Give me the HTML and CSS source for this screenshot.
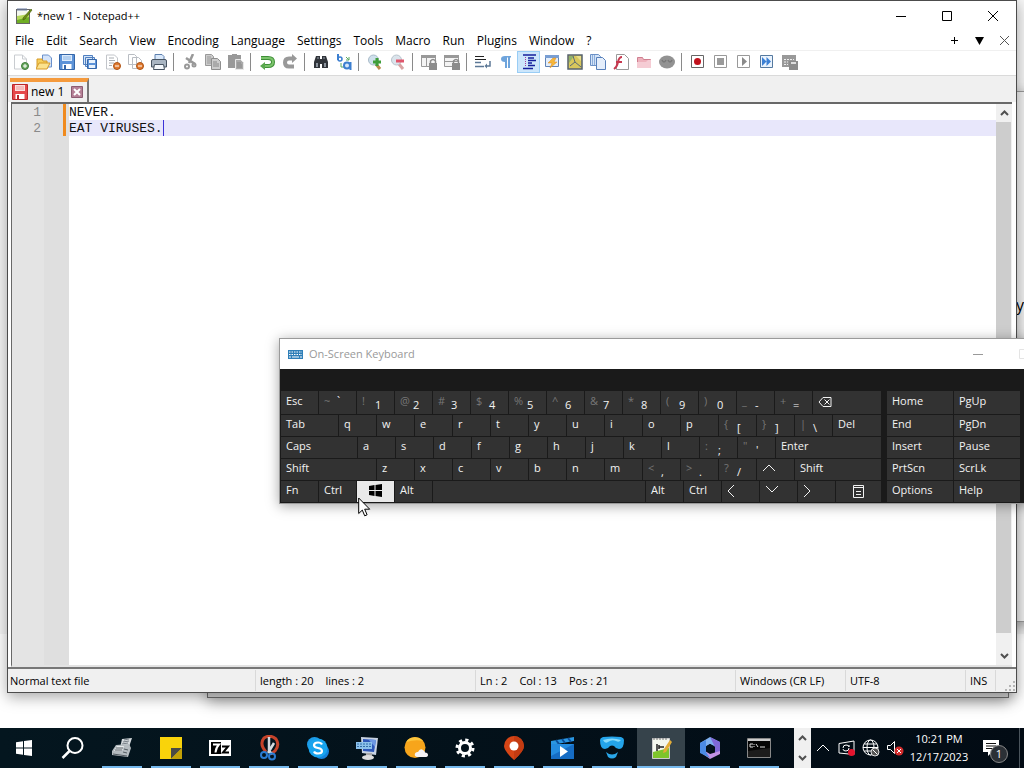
FILE: index.html
```html
<!DOCTYPE html>
<html lang="en">
<head>
    <meta charset="UTF-8">
    <meta name="viewport" content="width=device-width, initial-scale=1.0">
    <title>*new 1 - Notepad++</title>
    <link rel="stylesheet" href="styles.css">
</head>
<body>

<div class="desktop">

    <!-- windows behind the editor -->
    <div class="window back-top"></div>
    <div class="window back-right"><span class="back-text">y</span></div>
    <div class="window back-bottom"></div>

    <main class="window notepad">
        <header class="titlebar">
            <svg class="app-icon" width="18" height="18" viewBox="0 0 18 18">
                <rect x="1.5" y="2.5" width="13" height="14" fill="#f4f8ee" stroke="#666"/>
                <path d="M2 9l12-2v9H2z" fill="#b5d95c"/>
                <path d="M2 13l12-3v6H2z" fill="#6fae24"/>
                <path d="M3 1v3M5 1v3M7 1v3M9 1v3M11 1v3" stroke="#6c7fa8"/>
                <path d="M16 2l1 1-7 9-2 1 0-2z" fill="#6b8f16" stroke="#41570c" stroke-width=".6"/>
            </svg>
            <h1>*new 1 - Notepad++</h1>
            <div class="win-buttons">
                <button aria-label="Minimize"><svg width="12" height="12" viewBox="0 0 12 12"><path d="M1 6.500h10"/></svg></button>
                <button aria-label="Maximize"><svg width="12" height="12" viewBox="0 0 12 12"><path d="M1.500 1.500h9v9h-9z"/></svg></button>
                <button aria-label="Close"><svg width="12" height="12" viewBox="0 0 12 12"><path d="M1 1l10 10M11 1L1 11"/></svg></button>
            </div>
        </header>

        <nav class="menubar">
            <button>File</button>
            <button>Edit</button>
            <button>Search</button>
            <button>View</button>
            <button>Encoding</button>
            <button>Language</button>
            <button>Settings</button>
            <button>Tools</button>
            <button>Macro</button>
            <button>Run</button>
            <button>Plugins</button>
            <button>Window</button>
            <button>?</button>
            <div class="doc-buttons">
                <button aria-label="New tab"><svg width="9" height="9" viewBox="0 0 9 9"><path d="M1 4.500h7M4.500 1v7" stroke="#000"/></svg></button>
                <button aria-label="Tab list"><svg width="9" height="8" viewBox="0 0 9 8"><path d="M0 0h9L4.500 8z" fill="#000"/></svg></button>
                <button aria-label="Close tab"><svg width="9" height="9" viewBox="0 0 9 9"><path d="M0 0l9 9M9 0L0 9" stroke="#555"/></svg></button>
            </div>
        </nav>

        <div class="toolbar">
            <button aria-label="New"><svg viewBox="0 0 16 16"><path d="M1.500 1h8l4 4v10h-12z" fill="#fff" stroke="#c9ccd0"/><path d="M9.500 1v4h4" fill="none" stroke="#c9ccd0"/><circle cx="12" cy="12" r="3.500" fill="#6aa860" stroke="#3f7d3a"/><path d="M12 10v4M10 12h4" stroke="#fff"/></svg></button>
            <button aria-label="Open"><svg viewBox="0 0 16 16"><path d="M6.500 1h6l3 3v9h-9z" fill="#d5e4fa" stroke="#6a90cb"/><path d="M1 5h5l1 2h4v7H1z" fill="#f6cf5b" stroke="#d59a28"/><path d="M3 9h11l-3 6H0z" fill="#fbe28d" stroke="#d59a28"/></svg></button>
            <button aria-label="Save"><svg viewBox="0 0 16 16"><path d="M.5.500h15v15H.500z" fill="#5d93d8" stroke="#3566a8"/><path d="M3 1h10v6H3z" fill="#dcebfb"/><path d="M4 3h8M4 5h8" stroke="#8ab4e4"/><path d="M3.500 10h9v5h-9z" fill="#fff"/><path d="M5 11h2v4H5z" fill="#3566a8"/></svg></button>
            <button aria-label="Save all"><svg viewBox="0 0 16 16"><path d="M1.500 1.500h9v9h-9zM3.500 3.500h9v9h-9z" fill="#d3e4f8" stroke="#4f7fc0"/><path d="M5.500 5.500h9v9h-9z" fill="#5d93d8" stroke="#3566a8"/><path d="M7 6h6v3H7zM7 11h6v3H7z" fill="#eaf3fc"/></svg></button>
            <button aria-label="Close"><svg viewBox="0 0 16 16"><path d="M1.500 1h8l3 3v11h-11z" fill="#fff" stroke="#c2c5ca"/><path d="M4 4h5M4 6.500h6M4 9h5M4 11.500h3" stroke="#a9adb2"/><circle cx="12" cy="12" r="3.500" fill="#e07a30" stroke="#ad5213"/><path d="M10 12h4" stroke="#fff"/></svg></button>
            <button aria-label="Close all"><svg viewBox="0 0 16 16"><path d="M.5.500h6l2 2v8h-8zM4.500 3.500h6l3 3v8h-9z" fill="#fff" stroke="#b9bdc3"/><circle cx="12" cy="12" r="3.500" fill="#e07a30" stroke="#ad5213"/><path d="M10 12h4" stroke="#fff"/></svg></button>
            <button aria-label="Print"><svg viewBox="0 0 16 16"><path d="M4 6V.500h7l2 2V6" fill="#d9e8fa" stroke="#5c7fae"/><path d="M.5 7q0-1.500 1.500-1.500h12q1.500 0 1.500 1.500v6H.500z" fill="#a9b5c2" stroke="#475361"/><path d="M3.500 10.500h9l1 5h-11z" fill="#f4f8fc" stroke="#475361"/></svg></button>
            <span class="sep"></span>
            <button aria-label="Cut"><svg viewBox="0 0 16 16"><path d="M11 0L7 9M4 4l9 6" stroke="#999" stroke-width="2.500"/><circle cx="5" cy="12.500" r="2" fill="none" stroke="#999" stroke-width="2"/><circle cx="12" cy="11" r="1.500" fill="none" stroke="#999" stroke-width="2"/></svg></button>
            <button aria-label="Copy"><svg viewBox="0 0 16 16"><path d="M.5.500h6l2 2v9h-8z" fill="#ccc" stroke="#999"/><path d="M2 3h4M2 5h4M2 7h4M2 9h4" stroke="#999"/><path d="M6.500 4.500h6l3 3v8h-9z" fill="#ccc" stroke="#8e8e8e"/><path d="M8 8h4M8 10h6M8 12h6" stroke="#888"/></svg></button>
            <button aria-label="Paste"><svg viewBox="0 0 16 16"><path d="M0 1h4V0h5v1h4v13H0z" fill="#999"/><path d="M7.500 5.500h5l3 3v7h-8z" fill="#aaa" stroke="#e8e8e8"/><path d="M9 9h4M9 11h5M9 13h5" stroke="#888"/></svg></button>
            <span class="sep"></span>
            <button aria-label="Undo"><svg viewBox="0 0 16 16"><path d="M2 4h7q5 0 5 4t-5 4H5" fill="none" stroke="#3f8f38" stroke-width="4"/><path d="M2 4h7q5 0 5 4t-5 4H5" fill="none" stroke="#7cc46c" stroke-width="2"/><path d="M6 8v8L1 12z" fill="#5aa84e"/></svg></button>
            <button aria-label="Redo"><svg viewBox="0 0 16 16"><path d="M12 4.500H7q-4 0-4 4t4 4h5" fill="none" stroke="#999" stroke-width="4"/><path d="M10 0l5 4.500-5 4.500z" fill="#999"/></svg></button>
            <span class="sep"></span>
            <button aria-label="Find"><svg viewBox="0 0 16 16"><path d="M3 2h4v3h2V2h4l2 6v6H9v-4H7v4H1V8z" fill="#30343a"/><path d="M3 9h2v4H3zM11 9h2v4h-2z" fill="#8b939d"/><path d="M4 4h2M10 4h2" stroke="#9aa3ad"/></svg></button>
            <button aria-label="Replace"><svg viewBox="0 0 16 16"><path d="M2 0v6" stroke="#3c7fd0" stroke-width="2"/><circle cx="4" cy="5" r="2" fill="none" stroke="#3c7fd0" stroke-width="1.500"/><path d="M10 3l3 3M13 3v3h-3M5 9v4h4" fill="none" stroke="#5aa860"/><circle cx="11" cy="11.500" r="3" fill="#d4e6fa" stroke="#3c7fd0" stroke-width="2"/><path d="M14.500 8v8" stroke="#3c7fd0" stroke-width="2"/></svg></button>
            <span class="sep"></span>
            <button aria-label="Zoom in"><svg viewBox="0 0 16 16"><path d="M9 10l4 5" stroke="#b98b4b" stroke-width="3"/><circle cx="6.500" cy="6" r="5" fill="#cfe0ec" stroke="#a9bbc9"/><path d="M10 4v8M6 8h8" stroke="#3f9e3a" stroke-width="3"/></svg></button>
            <button aria-label="Zoom out"><svg viewBox="0 0 16 16"><path d="M9 10l4 5" stroke="#d9a3a3" stroke-width="3"/><circle cx="6.500" cy="6" r="5" fill="#dbe4ec" stroke="#b9c4cd"/><path d="M6 7h8" stroke="#e0566c" stroke-width="3"/></svg></button>
            <span class="sep"></span>
            <button aria-label="Sync vertical scrolling"><svg viewBox="0 0 16 16"><path d="M.5 1.500h14v11H.500zM5.500 2v10" fill="#f4f4f4" stroke="#999"/><path d="M0 1h15v3H0z" fill="#999"/><path d="M8 9h8v7H8z" fill="#8c8c8c"/><path d="M9.500 9V7q2.500-3 5 0v2" fill="none" stroke="#8c8c8c" stroke-width="1.500"/></svg></button>
            <button aria-label="Sync horizontal scrolling"><svg viewBox="0 0 16 16"><path d="M.5 1.500h14v11H.500zM0 7.500h14" fill="#f4f4f4" stroke="#999"/><path d="M0 1h15v3H0z" fill="#999"/><path d="M8 9h8v7H8z" fill="#8c8c8c"/><path d="M9.500 9V7q2.500-3 5 0v2" fill="none" stroke="#8c8c8c" stroke-width="1.500"/></svg></button>
            <span class="sep"></span>
            <button aria-label="Word wrap"><svg viewBox="0 0 16 16"><path d="M0 2.500h9M0 5.500h11" stroke="#222"/><path d="M0 8.500h6M0 12.500h9" stroke="#5c7896" stroke-width="1.500"/><path d="M15 7v5h-4" fill="none" stroke="#5c7896" stroke-width="1.500"/><path d="M12 9.500v5L9.500 12z" fill="#5c7896"/></svg></button>
            <button aria-label="Show all characters"><svg viewBox="0 0 16 16"><path d="M7 8Q3 8 3 5t4-3h6v1.500h-1V14h-2V3.500H9V14H7z" fill="#6ea4dc"/></svg></button>
            <button class="on" aria-label="Indent guide"><svg viewBox="0 0 16 16"><path d="M2 1h13M7 4h6M7 6.500h8M7 9h4M7 11.500h7M2 14.500h10" stroke="#16209c" stroke-width="1.700"/><path d="M4.500 3v10" stroke="#a63b9c" stroke-dasharray="1 1"/></svg></button>
            <button aria-label="Define language"><svg viewBox="0 0 16 16"><path d="M1.500 1.500h13v11h-13z" fill="#e4eefa" stroke="#6183b5"/><path d="M1 1h14v3H1z" fill="#7a9fd3"/><path d="M9 4l3 0-2 4h3l-7 6 2-5H4z" fill="#f6b73a" stroke="#dd8b22" stroke-width=".5"/></svg></button>
            <button aria-label="Document map"><svg viewBox="0 0 16 16"><path d="M1 1h14v14H1z" fill="#d8c75c" stroke="#56626e" stroke-width="1.500"/><path d="M2 2l5 0-5 7z" fill="#91b36b"/><path d="M6 2l2 6 6 5M8 8l-5 4" fill="none" stroke="#5a6b75"/><path d="M9 2h5v5z" fill="#e9df8b"/></svg></button>
            <button aria-label="Document list"><svg viewBox="0 0 16 16"><path d="M.5.500h8l2 2v9H.500z" fill="#d3e3f7" stroke="#6a90c6"/><path d="M6.500 3.500h6l3 3v9h-9z" fill="#e4eefb" stroke="#5780bb"/><path d="M2.500 1v10M4.500 1v10" stroke="#8caedb"/></svg></button>
            <button aria-label="Function list"><svg viewBox="0 0 16 16"><path d="M3.500.500h8l4 4v11h-12z" fill="#fff" stroke="#9a9a9a"/><path d="M9 3Q6 3 5 8t-4 7M3 8h6" fill="none" stroke="#c7394f" stroke-width="2"/></svg></button>
            <button aria-label="Folder as workspace"><svg viewBox="0 0 16 16"><path d="M1.500 3.500h5l1 2h7v8h-13z" fill="#eeb1bc" stroke="#cf7f90"/><path d="M1 8h9l2-2h3v8H1z" fill="#f5ccd4"/></svg></button>
            <button aria-label="Monitoring"><svg viewBox="0 0 16 16"><ellipse cx="8" cy="8" rx="8" ry="6.500" fill="#929292"/><path d="M3 6q2 4 4 0M9 6q2 4 4 0" fill="none" stroke="#777" stroke-width="1.500"/></svg></button>
            <span class="sep"></span>
            <button aria-label="Record macro"><svg viewBox="0 0 16 16"><path d="M1.500 1.500h12v12h-12z" fill="#fff" stroke="#666"/><circle cx="7.500" cy="7.500" r="3.500" fill="#c1121c"/></svg></button>
            <button aria-label="Stop recording"><svg viewBox="0 0 16 16"><path d="M1.500 1.500h12v12h-12z" fill="#fff" stroke="#999"/><path d="M4 4h7v7H4z" fill="#9a9a9a"/></svg></button>
            <button aria-label="Play macro"><svg viewBox="0 0 16 16"><path d="M1.500 1.500h12v12h-12z" fill="#fff" stroke="#999"/><path d="M6 3l5 4.500L6 12z" fill="#8a8a8a"/></svg></button>
            <button aria-label="Run macro multiple times"><svg viewBox="0 0 16 16"><path d="M1.500 1.500h12v12h-12z" fill="#eaf3fd" stroke="#55799f"/><path d="M3 3l4.500 4.500L3 12zM7.500 3L12 7.500 7.500 12z" fill="#3c80d4"/></svg></button>
            <button aria-label="Save macro"><svg viewBox="0 0 16 16"><path d="M0 1h14v12H0z" fill="#999"/><path d="M2 5.500h10M2 8h4M2 10.500h4" stroke="#eee" stroke-dasharray="2 1"/><path d="M7 7h9v9H7z" fill="#8b8b8b"/><path d="M9 8h5v2H9z" fill="#ddd"/></svg></button>
        </div>

        <div class="tabbar">
            <div class="tab">
                <svg width="16" height="16" viewBox="0 0 16 16"><path d="M.5.500h15v15H.500z" fill="#e5484a" stroke="#b9272b"/><path d="M3 1h10v6H3z" fill="#fbe0e0"/><path d="M4 3h8M4 5h8" stroke="#e99"/><path d="M3.500 10h9v5h-9z" fill="#fff"/><path d="M5 11h2v4H5z" fill="#b9272b"/></svg>
                <span>new 1</span>
                <button aria-label="Close new 1"><svg width="12" height="12" viewBox="0 0 12 12"><path d="M.5.500h11v11H.500z" fill="#b58096" stroke="#8d5c72"/><path d="M3 3l6 6M9 3l-6 6" stroke="#fff" stroke-width="2"/></svg></button>
            </div>
        </div>

        <section class="editor">
            <div class="line-numbers">1<br>2</div>
            <div class="fold-margin"><span class="changed"></span></div>
            <div class="text-area">
                <textarea aria-label="Document text" spellcheck="false">NEVER.
EAT VIRUSES.</textarea>
                <span class="caret"></span>
            </div>
            <div class="scrollbar">
                <button aria-label="Scroll up"><svg width="9" height="6" viewBox="0 0 9 6"><path d="M1 5l3.500-3.500L8 5"/></svg></button>
                <div class="thumb"></div>
                <button aria-label="Scroll down"><svg width="9" height="6" viewBox="0 0 9 6"><path d="M1 1l3.500 3.500L8 1"/></svg></button>
            </div>
        </section>

        <footer class="statusbar">
            <span>Normal text file</span>
            <span class="pair"><span>length : 20</span><span>lines : 2</span></span>
            <span class="pair"><span>Ln : 2</span><span>Col : 13</span><span>Pos : 21</span></span>
            <span>Windows (CR LF)</span>
            <span>UTF-8</span>
            <span>INS</span>
            <span class="grip"><svg width="10" height="10" viewBox="0 0 10 10"><path d="M8 0h2v2H8zM4 4h2v2H4zM8 4h2v2H8zM0 8h2v2H0zM4 8h2v2H4zM8 8h2v2H8z" fill="#b5b5b5"/></svg></span>
        </footer>
    </main>

    <section class="osk">
        <header class="osk-title">
            <svg width="15" height="9" viewBox="0 0 15 9"><path d="M0 0h15v9H0z" fill="#2f7fb8"/><path d="M1 2h13M1 4.500h13" stroke="#fff" stroke-dasharray="1.500 1"/><path d="M1 7h2M4 7h7M12 7h2" stroke="#fff"/></svg>
            <h2>On-Screen Keyboard</h2>
            <div class="win-buttons">
                <button aria-label="Minimize keyboard"><svg width="12" height="12" viewBox="0 0 12 12"><path d="M1 6.500h10"/></svg></button>
                <button disabled aria-label="Maximize keyboard"><svg width="12" height="12" viewBox="0 0 12 12"><path d="M1.500 1.500h9v9h-9z"/></svg></button>
                <button aria-label="Close keyboard"><svg width="12" height="12" viewBox="0 0 12 12"><path d="M1 1l10 10M11 1L1 11"/></svg></button>
            </div>
        </header>
        <div class="osk-body">
            <div class="keys">
                <div class="row first">
                    <button>Esc</button>
                    <button class="dual flat"><sup>~</sup><b>`</b></button>
                    <button class="dual"><sup>!</sup><b>1</b></button>
                    <button class="dual"><sup>@</sup><b>2</b></button>
                    <button class="dual"><sup>#</sup><b>3</b></button>
                    <button class="dual"><sup>$</sup><b>4</b></button>
                    <button class="dual"><sup>%</sup><b>5</b></button>
                    <button class="dual"><sup>^</sup><b>6</b></button>
                    <button class="dual"><sup>&amp;</sup><b>7</b></button>
                    <button class="dual"><sup>*</sup><b>8</b></button>
                    <button class="dual"><sup>(</sup><b>9</b></button>
                    <button class="dual"><sup>)</sup><b>0</b></button>
                    <button class="dual"><sup>_</sup><b>-</b></button>
                    <button class="dual"><sup>+</sup><b>=</b></button>
                    <button class="fill" aria-label="Backspace"><svg width="14" height="12" viewBox="0 0 14 12"><path d="M5 1.500h8v9H5L1 6z M6.500 3.500l5 5M11.500 3.500l-5 5"/></svg></button>
                </div>
                <div class="row">
                    <button class="w-tab">Tab</button>
                    <button>q</button>
                    <button>w</button>
                    <button>e</button>
                    <button>r</button>
                    <button>t</button>
                    <button>y</button>
                    <button>u</button>
                    <button>i</button>
                    <button>o</button>
                    <button>p</button>
                    <button class="dual"><sup>{</sup><b>[</b></button>
                    <button class="dual"><sup>}</sup><b>]</b></button>
                    <button class="dual"><sup>|</sup><b>\</b></button>
                    <button class="fill">Del</button>
                </div>
                <div class="row">
                    <button class="w-caps">Caps</button>
                    <button>a</button>
                    <button>s</button>
                    <button>d</button>
                    <button>f</button>
                    <button>g</button>
                    <button>h</button>
                    <button>j</button>
                    <button>k</button>
                    <button>l</button>
                    <button class="dual"><sup>:</sup><b>;</b></button>
                    <button class="dual"><sup>"</sup><b>'</b></button>
                    <button class="fill">Enter</button>
                </div>
                <div class="row">
                    <button class="w-shift">Shift</button>
                    <button>z</button>
                    <button>x</button>
                    <button>c</button>
                    <button>v</button>
                    <button>b</button>
                    <button>n</button>
                    <button>m</button>
                    <button class="dual"><sup>&lt;</sup><b>,</b></button>
                    <button class="dual"><sup>&gt;</sup><b>.</b></button>
                    <button class="dual"><sup>?</sup><b>/</b></button>
                    <button aria-label="Up"><svg width="14" height="12" viewBox="0 0 14 12"><path d="M1 8l6-6 6 6"/></svg></button>
                    <button class="fill">Shift</button>
                </div>
                <div class="row">
                    <button>Fn</button>
                    <button>Ctrl</button>
                    <button class="win" aria-label="Windows"><svg width="13" height="13" viewBox="0 0 13 13"><path d="M0 2l5.500-1v5H0zM6.500 1L13 0v6H6.500zM0 7h5.500v5L0 11zM6.500 7H13v6l-6.500-1z"/></svg></button>
                    <button>Alt</button>
                    <button class="fill" aria-label="Space"></button>
                    <button>Alt</button>
                    <button>Ctrl</button>
                    <button aria-label="Left"><svg width="8" height="14" viewBox="0 0 8 14"><path d="M7 0L1 6l6 6"/></svg></button>
                    <button aria-label="Down"><svg width="14" height="12" viewBox="0 0 14 12"><path d="M1 1l6 6 6-6"/></svg></button>
                    <button aria-label="Right"><svg width="8" height="14" viewBox="0 0 8 14"><path d="M1 0l6 6-6 6"/></svg></button>
                    <button class="w-menu" aria-label="Menu"><svg width="11" height="13" viewBox="0 0 11 13"><path d="M.5.500h10v12H.500zM0 2.500h11M3 6.500h5M3 9.500h5"/></svg></button>
                </div>
            </div>
            <div class="nav-keys">
                <button>Home</button>
                <button>PgUp</button>
                <button>End</button>
                <button>PgDn</button>
                <button>Insert</button>
                <button>Pause</button>
                <button>PrtScn</button>
                <button>ScrLk</button>
                <button>Options</button>
                <button>Help</button>
            </div>
        </div>
    </section>

    <svg class="pointer" width="13" height="20" viewBox="0 0 13 20"><path d="M.7 1v15.500l3.600-3.400 2.400 5.700 2.400-1-2.400-5.600h5z" fill="#fff" stroke="#000"/></svg>
</div>

<footer class="taskbar">
    <div class="apps">
        <button aria-label="Start"><svg width="16" height="16" viewBox="0 0 16 16"><path d="M0 2.300L7 1.300v6.200H0zM8 1.100L16 0v7.500H8zM0 8.500h7v6.200l-7-1zM8 8.500h8V16l-8-1.100z" fill="#fff"/></svg></button>
        <button aria-label="Search"><svg width="24" height="24" viewBox="0 0 24 24"><circle cx="14" cy="9.500" r="7.500" fill="none" stroke="#fff" stroke-width="2"/><path d="M8.500 15L1.500 22" stroke="#fff" stroke-width="2.500"/></svg></button>
        <button class="open" aria-label="Fax"><svg width="24" height="24" viewBox="0 0 24 24"><path d="M12 3l10-1-3 9-9 1z" fill="#d5dadd"/><path d="M14 4l5-1M13 6l6-1M12 8l6-1" stroke="#777f86"/><path d="M6 9l13-1 2 4-3 9-16-2v-4z" fill="#b5bcc0"/><path d="M7 10l7 0-2 5-8 0z" fill="#e8ebec"/><path d="M6 12h7M5 14h7M14 13l4 1M13 16l4 1M3 18l14 2" stroke="#545c62"/></svg></button>
        <button class="open" aria-label="Sticky Notes"><svg width="24" height="24" viewBox="0 0 24 24"><path d="M1 1h22v22H1z" fill="#f9d30b"/><path d="M12 12h11L12 23z" fill="#4a4a45"/><path d="M23 12v11H12z" fill="#c3a106"/></svg></button>
        <button class="open" aria-label="7-Zip"><svg width="24" height="24" viewBox="0 0 24 24"><path d="M1 4h22v16H1z" fill="#fff"/><path d="M3 6h10v12H3z" fill="#000"/><path d="M5 8.500h6q-3 3-3.500 8" fill="none" stroke="#fff" stroke-width="2"/><path d="M14 10.500h6l-5 6h6" fill="none" stroke="#000" stroke-width="2"/></svg></button>
        <button class="open" aria-label="Snipping Tool"><svg width="24" height="26" viewBox="0 0 24 26"><path d="M9 17Q2 9 7 3q6-4 12 1 4 6-1 12l-4 3" fill="none" stroke="#c5432a" stroke-width="3"/><path d="M12 2v14l3 3M17 8l-6 10" stroke="#d5dbe0" stroke-width="2.500" fill="none"/><circle cx="7" cy="20" r="3" fill="none" stroke="#2b7cd3" stroke-width="2"/><circle cx="15" cy="21.500" r="3" fill="none" stroke="#2b7cd3" stroke-width="2"/></svg></button>
        <button class="open" aria-label="Skype"><svg width="24" height="24" viewBox="0 0 24 24"><circle cx="8.500" cy="8.500" r="7.500" fill="#1c9be8"/><circle cx="15.500" cy="15.500" r="7.500" fill="#1583dc"/><circle cx="12" cy="12" r="9.500" fill="#18a4ee"/><path d="M16 8.500q-1-2-4-2-4 0-4 2.700 0 2 4 2.800 4 .8 4 3 0 2.500-4 2.500-3 0-4-2" fill="none" stroke="#fff" stroke-width="2.200"/></svg></button>
        <button class="open" aria-label="On-Screen Keyboard"><svg width="26" height="26" viewBox="0 0 26 26"><path d="M7 2l17 1-2 17-14-2z" fill="#c8d3e3"/><path d="M9 4l13 1-2 12-11-1z" fill="#2d57b8"/><path d="M14 4l8 1-1 7z" fill="#6d98e2"/><path d="M2 7h16v7H2z" fill="#8cc1eb"/><path d="M3 9h14M3 11.500h14" stroke="#336fa8" stroke-dasharray="2 1"/><path d="M12 18h6v4h-6z" fill="#aaa"/><ellipse cx="14" cy="22.500" rx="6" ry="2.500" fill="#ddd"/></svg></button>
        <button class="open" aria-label="Weather"><svg width="26" height="24" viewBox="0 0 26 24"><circle cx="12" cy="11.500" r="10.500" fill="#f7a51b"/><path d="M3 6a10.500 10.500 0 0 1 17-1q-7-2-17 1z" fill="#fcc63e"/><path d="M14 21q-3-1-2-3.500 1-2 3-1.500 2-4 5-2 2 1 2 2.500 3 0 3 2.500 0 2-3 2z" fill="#f5f3f5"/></svg></button>
        <button class="open" aria-label="Settings"><svg width="20" height="20" viewBox="0 0 20 20"><circle cx="10" cy="10" r="8" fill="none" stroke="#fff" stroke-width="3" stroke-dasharray="3.140 3.140"/><circle cx="10" cy="10" r="5.500" fill="none" stroke="#fff" stroke-width="3"/></svg></button>
        <button class="open" aria-label="Maps"><svg width="22" height="24" viewBox="0 0 22 24"><path d="M11 24Q1 15 1 10a10 10 0 0 1 20 0q0 5-10 14z" fill="#d64516"/><path d="M11 0a10 10 0 0 1 10 10q0 5-10 14z" fill="#c33b12"/><circle cx="11" cy="10" r="4.500" fill="#fff"/></svg></button>
        <button class="open" aria-label="Movies"><svg width="26" height="24" viewBox="0 0 26 24"><path d="M1 5l23-4v4L1 9z" fill="#2a97e3"/><path d="M6 4l3 4M12 3l3 4M18 2l3 4" stroke="#0c4f9b" stroke-width="2"/><path d="M1 8h23v15H1z" fill="#156cc4"/><path d="M1 8h23L1 20z" fill="#248ce0"/><path d="M10 10l8 5.500-8 5.500z" fill="#fff"/></svg></button>
        <button class="open" aria-label="Mixed Reality"><svg width="26" height="24" viewBox="0 0 26 24"><path d="M1 4q0-2 3-3 9-1 18 0 3 1 3 3 0 9-5 9-3 0-5-3-2-1-4 0-2 3-5 3-5 0-5-9z" fill="#24a4ea"/><path d="M4 4q9-3 18 0-2 3-5 1-4-2-8 1-3 2-5-2z" fill="#86dafa"/><path d="M7 16q6 5 12 0l-2 5q-4 3-8 0z" fill="#2aa7e9"/></svg></button>
        <button class="open active" aria-label="Notepad++"><svg width="22" height="24" viewBox="0 0 22 24"><path d="M2.500 2.500h17v20h-17z" fill="#f3f7ee" stroke="#ccc"/><path d="M3 16l16-4v10H3z" fill="#7ec52b"/><path d="M4 2v2M7 2v2M10 2v2M13 2v2M16 2v2" stroke="#777"/><path d="M7 8v7M9 9v4M9 11h5" stroke="#222" stroke-width="1.500"/><path d="M20 4l2 2-6 10-3 1 1-4z" fill="#e4ad38"/></svg></button>
        <button class="open" aria-label="Microsoft 365"><svg width="22" height="24" viewBox="0 0 22 24"><path d="M11 1l10 5-4 5-6-3-5 3v7L1 16V7z" fill="#7fb1f0"/><path d="M11 1l10 5v11l-5 1v-7z" fill="#8069d6"/><path d="M1 16l5-6v5l5 3 10-3v3l-10 5z" fill="#c292e4"/><path d="M1 7l6-3v12l4 6L1 17z" fill="#4b8ae4"/><path d="M11 8l3.500 2v4L11 16l-3.500-2v-4z" fill="#04121c"/></svg></button>
        <button class="open" aria-label="Command Prompt"><svg width="24" height="20" viewBox="0 0 24 20"><path d="M.5.500h23v19H.500z" fill="#050505" stroke="#888"/><path d="M1 1h22v2H1z" fill="#ccc"/><path d="M3 6h3M3 6v3h3M7 6v1M7 8v1M9 6l2 3M13 9h5" stroke="#ddd" fill="none"/><path d="M1 13l22-3v9H1z" fill="#1c1c1c"/></svg></button>
    </div>
    <div class="task-scroll">
        <button aria-label="Scroll tasks up"><svg width="9" height="6" viewBox="0 0 9 6"><path d="M1 5l3.500-3.500L8 5"/></svg></button>
        <button aria-label="Scroll tasks down"><svg width="9" height="6" viewBox="0 0 9 6"><path d="M1 1l3.500 3.500L8 1"/></svg></button>
    </div>
    <div class="tray">
        <button aria-label="Hidden icons"><svg width="14" height="16" viewBox="0 0 14 16"><path d="M1 11l6-6 6 6"/></svg></button>
        <button aria-label="Update"><svg width="18" height="18" viewBox="0 0 18 18"><path d="M1 4.500L16 2v13.500L1 14z"/><path d="M5 9q0-3 3-3t3 2V6M11 9q0 3-3 3t-3-2"/><circle cx="13.500" cy="13.500" r="3.500" fill="#e5142e" stroke="none"/></svg></button>
        <button aria-label="Network"><svg width="18" height="18" viewBox="0 0 18 18"><circle cx="8.500" cy="8.500" r="7.500"/><ellipse cx="8.500" cy="8.500" rx="3.500" ry="7.500"/><path d="M1 8.500h15M2 5h13M2 12h8"/><circle cx="13" cy="13" r="4" fill="#555" stroke="#ddd"/><path d="M10.500 10.500l5 5"/></svg></button>
        <button aria-label="Volume"><svg width="18" height="18" viewBox="0 0 18 18"><path d="M1.500 6.500h3l4-4v12l-4-4h-3z"/><circle cx="13" cy="12" r="4.500" fill="#d22c2c" stroke="none"/><path d="M11 10l4 4M15 10l-4 4"/></svg></button>
        <div class="clock">10:21 PM<br>12/17/2023</div>
        <button class="notify" aria-label="Notifications"><svg width="24" height="24" viewBox="0 0 24 24"><path d="M0 4h16v12h-7l-4 4v-4H0z" fill="#fff" stroke="none"/><path d="M3 7.500h10M3 10h10M3 12.500h10" stroke="#111"/></svg><span class="badge">1</span></button>
        <span class="peek"></span>
    </div>
</footer>

</body>
</html>
```
FILE: styles.css
```css
* {
    box-sizing: border-box;
}

body {
    display: flex;
    flex-direction: column;
    height: 100vh;
    margin: 0;
    overflow: hidden;
    font-family: "Segoe UI", "Open Sans", sans-serif;
    font-size: 11px;
    line-height: 16px;
    color: #000;
}

button {
    display: flex;
    align-items: center;
    justify-content: center;
    margin: 0;
    padding: 0;
    border: none;
    background: none;
    font: inherit;
    color: inherit;
}

h1, h2 {
    margin: 0;
    font-size: 11px;
    font-weight: normal;
}

.desktop {
    position: relative;
    flex: 1;
    overflow: hidden;
    background: #fff;
}

.window {
    position: absolute;
    border: 1px solid #6e6e6e;
    box-shadow: 0 4px 14px rgba(0, 0, 0, 0.35);
}

/* windows behind */
.back-top {
    top: -10px;
    left: -20px;
    right: -20px;
    bottom: 94px;
    border: none;
    background: #f6f6f6;
    box-shadow: none;
}

.back-right {
    top: 91px;
    left: 500px;
    right: -20px;
    bottom: 106px;
    border-color: #999;
    background: #f0f0f0;
}

.back-text {
    position: absolute;
    top: 205px;
    right: 19px;
    font-size: 16px;
}

.back-bottom {
    top: 300px;
    left: 207px;
    right: 15px;
    bottom: 30px;
    background: #d4d4d4;
}

/* editor window */
.notepad {
    display: flex;
    flex-direction: column;
    top: 0;
    left: 7px;
    right: 7px;
    bottom: 35px;
    border-color: #4c4c4c;
    background: #fff;
}

.titlebar {
    display: flex;
    align-items: center;
    height: 30px;
    padding-left: 7px;
    gap: 4px;
}

.win-buttons {
    display: flex;
    align-self: stretch;
    margin-left: auto;
}

.win-buttons button {
    width: 46px;
}

.win-buttons svg {
    fill: none;
    stroke: #000;
}

.menubar {
    display: flex;
    align-items: center;
    height: 19px;
    padding-left: 1px;
    font-size: 12px;
}

.menubar > button {
    padding: 0 6px;
}

.doc-buttons {
    display: flex;
    gap: 16px;
    margin-left: auto;
    padding-right: 7px;
}

.toolbar {
    display: flex;
    height: 26px;
    padding-left: 1px;
    border-top: 1px solid #f0f0f0;
    border-bottom: 1px solid #dadada;
}

.toolbar button {
    width: 23px;
    height: 22px;
    border: 1px solid transparent;
}

.toolbar svg {
    width: 16px;
    height: 16px;
    fill: none;
}

.toolbar .on {
    border-color: #99cdf5;
    background: #cce6fb;
}

.sep {
    width: 8px;
    height: 18px;
    margin-top: 2px;
    background: linear-gradient(#8a8a8a, #8a8a8a) 3px 0 / 1px 100% no-repeat;
}

.tabbar {
    height: 26px;
    padding: 2px 2px 0;
    background: #f0f0f0;
}

.tab {
    display: inline-flex;
    align-items: center;
    height: 24px;
    padding: 0 4px 0 2px;
    gap: 3px;
    border-top: 4px solid #f59a3c;
    border-right: 2px solid #777;
}

.tab span {
    font-size: 12px;
}

.tab button {
    margin-left: 4px;
}

.editor {
    display: flex;
    flex: 1;
    min-height: 0;
    margin: 0 4px 0 3px;
    border-top: 2px solid #686868;
    border-left: 1px solid #686868;
    border-bottom: 2px solid #e3e3e3;
    font-family: "Courier New", "Liberation Mono", monospace;
    font-size: 13px;
}

.line-numbers {
    width: 32px;
    padding: 1px 3px 0 0;
    background: #e4e4e4;
    color: #8a8a8a;
    text-align: right;
}

.fold-margin {
    width: 25px;
    padding-left: 19px;
    background: #dfdfdf;
}

.changed {
    display: block;
    width: 3px;
    height: 32px;
    background: #f08a1d;
}

.text-area {
    position: relative;
    flex: 1;
}

textarea {
    display: block;
    width: 100%;
    height: 100%;
    padding: 1px 0 0;
    border: none;
    outline: none;
    resize: none;
    background: linear-gradient(#e8e7fb, #e8e7fb) 0 16px / 100% 16px no-repeat #fff;
    font: inherit;
    color: #111;
}

.caret {
    position: absolute;
    top: 16px;
    left: 12ch;
    width: 1px;
    height: 16px;
    background: #3c32d8;
}

.scrollbar {
    display: flex;
    flex-direction: column;
    width: 16px;
    background: #f0f0f0;
}

.scrollbar button {
    height: 18px;
}

.scrollbar svg,
.task-scroll svg {
    fill: none;
    stroke: #505050;
    stroke-width: 2;
}

.thumb {
    flex: 1;
    margin: 0 1px 14px 0;
    background: #cdcdcd;
}

.statusbar {
    display: grid;
    grid-template-columns: 247px 220px 1fr 110px 120px 30px 21px;
    align-items: center;
    height: 25px;
    border-top: 2px solid #777;
    background: #f0f0f0;
}

.statusbar > span {
    height: 21px;
    padding: 3px 0 0 4px;
    border-left: 1px solid #d9d9d9;
}

.statusbar > span:first-child {
    padding-left: 2px;
    border-left: none;
}

.pair {
    display: flex;
    gap: 12px;
}

.statusbar .grip {
    display: flex;
    align-items: flex-end;
    justify-content: flex-end;
    padding: 0 1px 0 0;
}

/* on-screen keyboard */
.osk {
    position: absolute;
    top: 338px;
    left: 279px;
    right: -70px;
    border: 1px solid #9a9a9a;
    background: #1a1a1a;
    box-shadow: 0 2px 12px rgba(0, 0, 0, 0.35);
}

.osk-title {
    display: flex;
    align-items: center;
    height: 30px;
    padding-left: 8px;
    gap: 6px;
    background: #fff;
    color: #999;
}

.osk .win-buttons svg {
    stroke: #999;
}

.osk .win-buttons button:disabled svg {
    stroke: #e4e4e4;
}

.osk-body {
    display: flex;
    gap: 6px;
    padding: 22px 0 0 1px;
    color: #f2f2f2;
}

.keys {
    width: 600px;
}

.row {
    display: flex;
    gap: 1px;
    height: 21px;
    margin-bottom: 1px;
}

.row.first {
    height: 23px;
}

.osk-body button {
    flex: none;
    align-items: flex-start;
    justify-content: flex-start;
    width: 37px;
    padding: 1px 0 0 5px;
    background: #323232;
}

.osk-body .first button,
.osk-body .nav-keys button:nth-child(-n+2) {
    padding-top: 2px;
}

.osk-body svg {
    margin-top: 3px;
    fill: none;
    stroke: #f2f2f2;
}

.osk-body .w-tab { width: 57px; }
.osk-body .w-caps { width: 76px; }
.osk-body .w-shift { width: 95px; }

.osk-body .fill {
    flex: 1;
}

.osk-body .w-menu {
    width: 45px;
    padding-left: 17px;
}

.osk-body .win {
    justify-content: center;
    padding: 0;
    background: #e9e9e9;
}

.osk-body .win svg {
    fill: #000;
    stroke: none;
}

.dual sup {
    width: 13px;
    font-size: 11px;
    line-height: 16px;
    vertical-align: top;
    text-align: left;
    color: #777;
}

.dual b {
    padding-top: 4px;
    font-weight: normal;
}

.dual.flat b {
    padding-top: 0;
}

.nav-keys {
    display: grid;
    grid-template-columns: 66px 66px;
    grid-template-rows: 23px repeat(4, 21px);
    gap: 1px;
}

.osk-body .nav-keys button {
    width: 100%;
}

.pointer {
    position: absolute;
    top: 497px;
    left: 358px;
}

/* taskbar */
.taskbar {
    display: flex;
    height: 40px;
    background: linear-gradient(90deg, #04161f, #020b14);
    color: #fff;
}

.apps {
    display: flex;
    flex: 1;
    gap: 1px;
}

.apps button {
    width: 48px;
}

.apps .open {
    background: linear-gradient(#76b9ed, #76b9ed) 50% 100% / 40px 2px no-repeat;
}

.apps .active {
    background: linear-gradient(#76b9ed, #76b9ed) 50% 100% / 48px 2px no-repeat, #36434b;
}

.task-scroll {
    display: flex;
    flex-direction: column;
    width: 17px;
    background: #f0f0f0;
}

.task-scroll button {
    flex: 1;
}

.tray {
    display: flex;
    align-items: center;
}

.tray button {
    width: 24px;
    height: 40px;
}

.tray svg {
    fill: none;
    stroke: #fff;
}

.clock {
    width: 64px;
    line-height: 18px;
    text-align: center;
}

.tray .notify {
    position: relative;
    width: 48px;
}

.badge {
    position: absolute;
    top: 17px;
    left: 19px;
    width: 18px;
    height: 18px;
    border: 1px solid #888;
    border-radius: 50%;
    background: #2b3036;
    line-height: 16px;
}

.peek {
    width: 5px;
    height: 40px;
    border-left: 1px solid #4a545c;
}
```
